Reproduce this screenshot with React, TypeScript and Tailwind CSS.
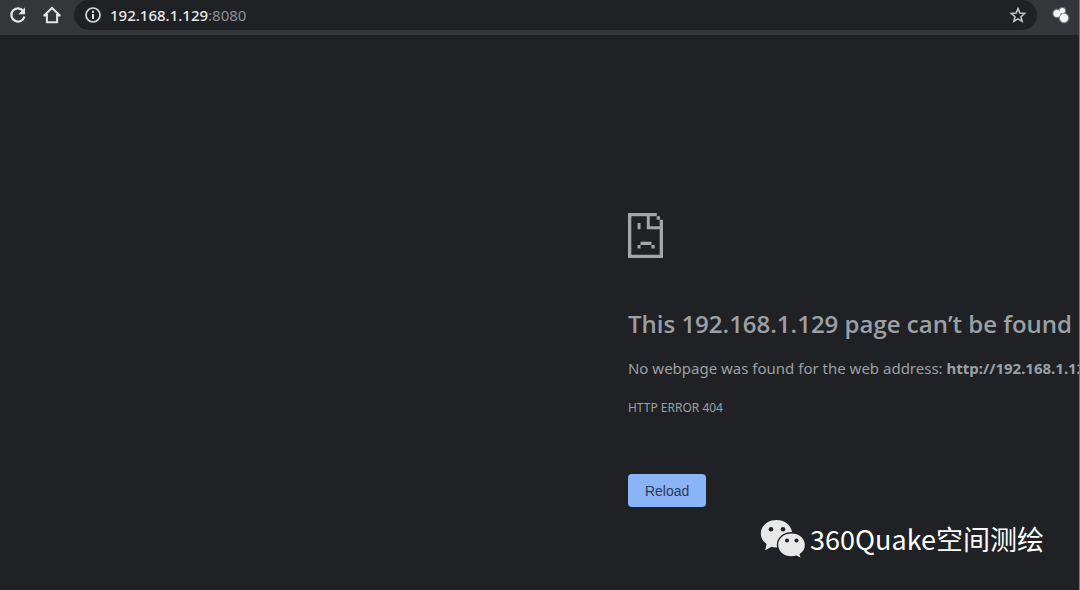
import React from "react";

function ReloadIcon() {
  return (
    <svg viewBox="0 0 20 20" className="size-5" fill="none" aria-hidden="true">
      <path d="M15.4 6.2A6.6 6.6 0 1 0 16.4 11.4" stroke="#e4e5e8" strokeWidth="2.2" />
      <path d="M17 2.6v6.6h-6.6z" fill="#e4e5e8" />
    </svg>
  );
}

function HomeIcon() {
  return (
    <svg viewBox="0 0 20 20" className="size-5" fill="none" stroke="#e4e5e8" strokeWidth="2" aria-hidden="true">
      <path d="M2 10.6 10 3l8 7.6M4.9 9v8.2h10.2V9" />
      <path d="M1.4 10.7h3.5M15.1 10.7h3.5" strokeWidth="1.4" />
    </svg>
  );
}

function InfoIcon() {
  return (
    <svg viewBox="0 0 18 18" className="size-[18px]" fill="none" aria-hidden="true">
      <circle cx="9" cy="9" r="7" stroke="#d5d6d9" strokeWidth="1.7" />
      <path d="M9 8v5M9 4.8v2" stroke="#e4e5e8" strokeWidth="2" />
    </svg>
  );
}

function StarIcon() {
  return (
    <svg viewBox="0 0 18 18" className="size-[18px]" fill="none" aria-hidden="true">
      <path
        d="m9 2.6 1.9 4.5 4.8.4-3.7 3.2 1.1 4.7L9 12.9l-4.1 2.5L6 10.7 2.3 7.5l4.8-.4z"
        stroke="#c3c4c8"
        strokeWidth="1.6"
      />
    </svg>
  );
}

function ExtensionIcon() {
  return (
    <svg viewBox="0 0 20 20" className="size-5" aria-hidden="true">
      <g fill="#77787b">
        <circle cx="6" cy="8.4" r="4.6" />
        <circle cx="11.3" cy="6" r="3.9" />
        <circle cx="13" cy="12.900" r="5.300" />
      </g>
      <g fill="#f4f4f4">
        <circle cx="6" cy="8.4" r="3.5" />
        <circle cx="11.3" cy="5.8" r="2.7" />
        <circle cx="13" cy="13" r="4.2" />
      </g>
    </svg>
  );
}

function SadPageIcon() {
  return (
    <svg viewBox="54 38 106 136" className="h-[45px] w-[35px]" fill="#a4a6aa" aria-hidden="true">
      <path d="M54 38h87v10H120v30h30V58h10v116H54zM64 48v116h86V87H111V48z" fillRule="evenodd" />
      <path d="M141 48h10v10h-10zM83 68h9v19h-9zM92 125h33v10H92zM83 135h9v10h-9zM125 135h10v10h-10z" />
    </svg>
  );
}

function ChatBubblesIcon() {
  return (
    <svg viewBox="0 0 46 40" className="h-10 w-[46px] shrink-0" aria-hidden="true">
      <path
        d="M16.5 1C7.7 1 .8 7 .8 14.5c0 4.3 2.2 8 5.8 10.5L5.2 31.2l6.4-3.4c1.6.4 3.2.6 4.9.6 8.8 0 15.7-6 15.7-13.6S25.3 1 16.5 1z"
        fill="#e8e8e8"
      />
      <path
        d="M31.5 13.8c-7.9 0-14 5.3-14 12.1s6.1 12.1 14 12.1c1.7 0 3.4-.3 5-.8l5.3 2.6-1.600-4.400c3.300-2.200 5.300-5.600 5.300-9.500 0-6.800-6.100-12.100-14-12.100z"
        fill="#e8e8e8"
        stroke="#202124"
        strokeWidth="1.4"
      />
      <g fill="#202124">
        <circle cx="11" cy="10.3" r="2.3" />
        <circle cx="23" cy="10.3" r="2.3" />
        <circle cx="27" cy="21.5" r="2" />
        <circle cx="36.5" cy="21.5" r="2" />
      </g>
    </svg>
  );
}

export default function App() {
  return (
    <div className="relative flex min-h-screen flex-col overflow-hidden border-r border-[#77787b] bg-[#202124] font-['Noto_Sans','Noto_Sans_CJK_SC',sans-serif] text-[#9aa0a6]">
      <header className="flex h-[35px] items-start bg-[#35363a] px-2">
        <div className="flex h-[30px] items-center gap-3.5">
          <button type="button" aria-label="Reload page">
            <ReloadIcon />
          </button>
          <button type="button" aria-label="Home">
            <HomeIcon />
          </button>
        </div>
        <div className="mr-3.5 ml-3 flex h-[30px] min-w-0 flex-1 items-center rounded-full bg-[#202124] px-2.5">
          <button type="button" aria-label="Site information">
            <InfoIcon />
          </button>
          <a href="http://192.168.1.129:8080" className="ml-2 flex-1 text-[15px] leading-5 font-medium text-[#e8eaed]">
            192.168.1.129<span className="font-normal text-[#8b8e93]">:8080</span>
          </a>
          <button type="button" aria-label="Bookmark this page">
            <StarIcon />
          </button>
        </div>
        <button type="button" aria-label="Extensions" className="flex h-[30px] items-center">
          <ExtensionIcon />
        </button>
      </header>

      <main className="ml-[58.2%] flex flex-col items-start pt-[178px] whitespace-nowrap">
        <SadPageIcon />
        <h1 className="mt-[50px] font-['Open_Sans',sans-serif] text-2xl leading-8 font-semibold">
          This 192.168.1.129 page can’t be found
        </h1>
        <p className="mt-[18px] text-[15px] leading-5">
          No webpage was found for the web address: <strong className="font-bold">http://192.168.1.129:8080/</strong>
        </p>
        <p className="mt-5 text-xs leading-5">HTTP ERROR 404</p>
        <button
          type="button"
          className="mt-14 h-[33px] rounded bg-[#8ab4f8] px-[17px] font-['Liberation_Sans',sans-serif] text-sm text-[#303b4e]"
        >
          Reload
        </button>
      </main>

      <div className="absolute right-[35px] bottom-[31px] flex items-center gap-1 text-white">
        <ChatBubblesIcon />
        <span className="font-['Noto_Sans_CJK_SC',sans-serif] text-[27px] leading-9 whitespace-nowrap">360Quake空间测绘</span>
      </div>
    </div>
  );
}
